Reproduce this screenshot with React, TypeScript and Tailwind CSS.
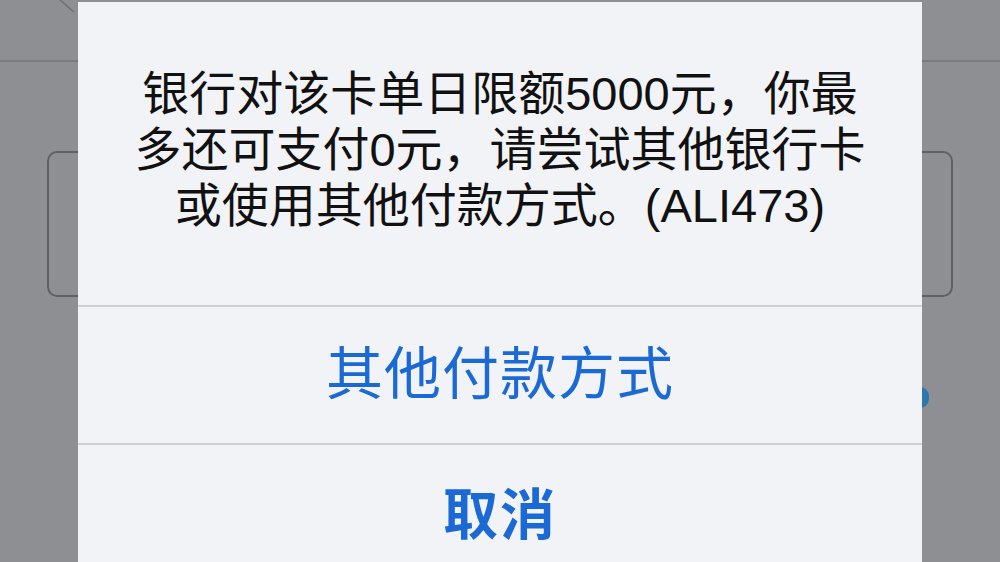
import React from "react";

const font = { fontFamily: '"Liberation Sans", "Noto Sans CJK SC", sans-serif' };

// Dimmed app behind the alert: a header strip, a rounded card and a small blue dot
const Backdrop: React.FC = () => {
  return (
    <div className="w-full h-full bg-[#8e8f93] flex flex-col">
      <div className="h-[62px] border-b-[2px] border-[#7b7c80] shrink-0 relative">
        <svg className="absolute left-[58px] top-0" width="20" height="12" viewBox="0 0 20 12">
          <line x1="2" y1="0" x2="16" y2="12" stroke="#6f7074" strokeWidth="1.5" />
        </svg>
      </div>
      <div className="mt-[89px] mx-[47px] h-[146px] rounded-[10px] border-[2px] border-[#5f6064] shrink-0" />
      <div className="mt-[90px] flex justify-end pr-[71px]">
        <div className="w-[18px] h-[21px] rounded-full bg-[#2a78b0]" />
      </div>
    </div>
  );
};

const App: React.FC = () => {
  return (
    <div className="relative w-[1000px] h-[562px] overflow-hidden" style={font}>
      <Backdrop />

      {/* Alert */}
      <div className="absolute left-[78px] top-[2px] w-[844px] h-[600px] bg-[#f2f3f6] flex flex-col">
        <div className="h-[305px] flex items-center justify-center border-b-[2px] border-[#cfd0d4]">
          <p className="text-[47px] leading-[56px] text-[#111] text-center whitespace-nowrap pb-[8px]">
            银行对该卡单日限额5000元，你最
            <br />
            多还可支付0元，请尝试其他银行卡
            <br />
            或使用其他付款方式。(ALI473)
          </p>
        </div>
        <button className="h-[138px] flex items-center justify-center border-b-[2px] border-[#cfd0d4] text-[57px] text-[#1a69d4] tracking-[1px]">
          其他付款方式
        </button>
        <button className="h-[140px] flex items-center justify-center text-[55px] font-bold text-[#1a69d4] tracking-[2px]">
          取消
        </button>
      </div>
    </div>
  );
};

export default App;
